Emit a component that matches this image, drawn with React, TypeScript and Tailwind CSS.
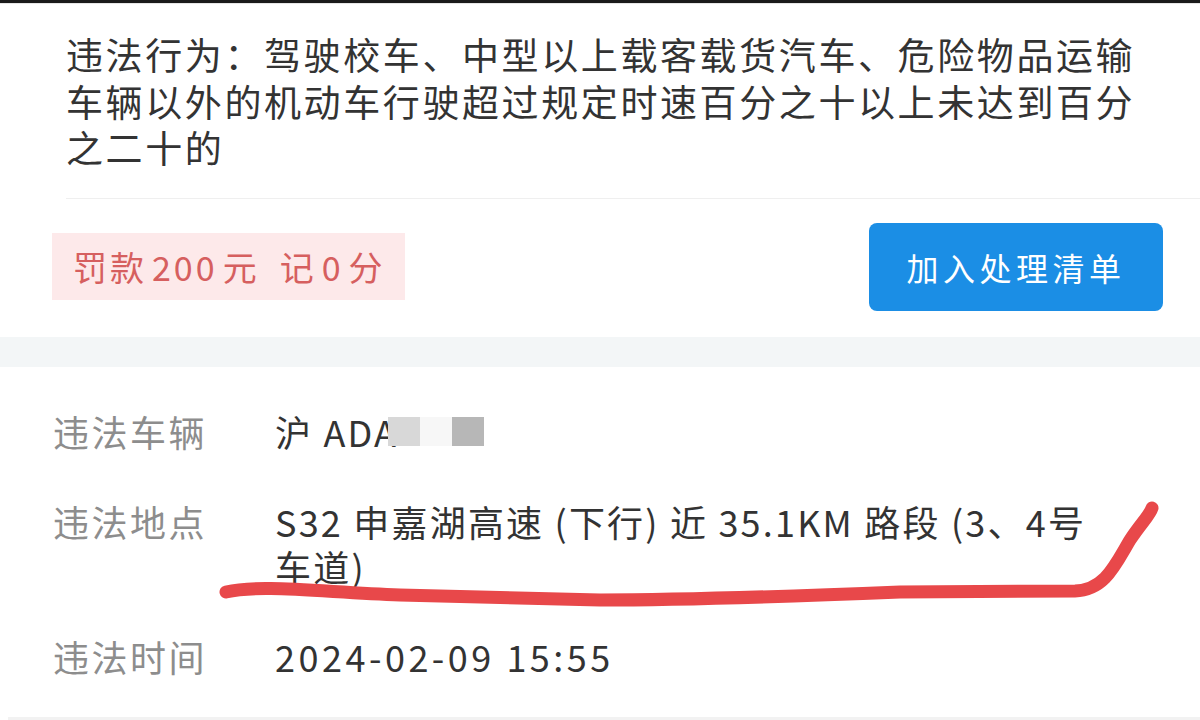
import React from "react";

const FONT = {
  fontFamily: '"Noto Sans CJK SC", "Noto Sans", sans-serif',
};

/** Label / value row in the detail list */
function InfoRow({ label, children }: { label: string; children: React.ReactNode }) {
  return (
    <div className="flex items-start">
      <div className="w-[222px] shrink-0 text-[36px] leading-[45px] tracking-[2.5px] text-[#8d8d8d]">
        {label}
      </div>
      <div className="flex-1 pr-[82px] text-[36px] leading-[45px] tracking-[2.2px] text-[#333]">
        {children}
      </div>
    </div>
  );
}

export default function App() {
  return (
    <div className="relative h-[720px] w-[1200px] overflow-hidden bg-white" style={FONT}>
      {/* top edge of the cropped screenshot */}
      <div className="h-[3px] bg-[#1a1a1a]" />
      <div className="h-px bg-[#e6e6e6]" />

      {/* Violation description */}
      <section className="pl-[66px] pt-[27px]">
        <p className="pr-[40px] text-[37px] leading-[46.5px] tracking-[2.6px] text-[#333]">
          违法行为：驾驶校车、中型以上载客载货汽车、危险物品运输车辆以外的机动车行驶超过规定时速百分之十以上未达到百分之二十的
        </p>
        <div className="mt-[27px] h-px bg-[#efefef]" />
      </section>

      {/* Penalty + action */}
      <section className="flex items-center justify-between pl-[52px] pr-[37px] pt-[24px] pb-[26px]">
        <div className="flex h-[67px] w-[353px] items-center bg-[#fde9ea] pl-[21px] text-[34px] tracking-[3px] text-[#d65f5f]">
          罚款<span className="mx-[5px]">200</span>元<span className="ml-[20px]">记</span>
          <span className="mx-[5px]">0</span>分
        </div>
        <button className="flex h-[88px] w-[294px] items-center justify-center rounded-[8px] bg-[#1b8ee5] text-[32px] tracking-[4.5px] text-white">
          加入处理清单
        </button>
      </section>

      {/* section gap band */}
      <div className="h-[30px] bg-[#f3f6f7]" />

      {/* Detail rows */}
      <section className="flex flex-col gap-[45px] pl-[53px] pt-[42px]">
        <InfoRow label="违法车辆">
          <span className="inline-flex items-center">
            沪 ADA
            <span className="-ml-[10px] h-[29px] w-[32px] bg-[#d8d8d8]" />
            <span className="h-[29px] w-[32px] bg-[#f7f7f7]" />
            <span className="h-[29px] w-[32px] bg-[#b7b7b7]" />
          </span>
        </InfoRow>
        <InfoRow label="违法地点">S32 申嘉湖高速 (下行) 近 35.1KM 路段 (3、4号车道)</InfoRow>
        <InfoRow label="违法时间">
          <span className="tracking-[3.5px]">2024-02-09 15:55</span>
        </InfoRow>
      </section>

      {/* bottom edge */}
      <div className="absolute bottom-0 left-[8px] right-0 h-[3px] bg-[#f2f2f2]" />

      {/* hand-drawn red underline annotation */}
      <svg className="pointer-events-none absolute left-0 top-0" width="1200" height="720">
        <path
          d="M 226 592 C 260 584, 320 592, 400 595 L 600 600 C 700 600, 800 596, 900 592 L 1075 591 C 1105 590, 1115 565, 1130 540 C 1142 522, 1150 515, 1152 508"
          fill="none"
          stroke="#e8484a"
          strokeWidth="13"
          strokeLinecap="round"
          strokeLinejoin="round"
        />
      </svg>
    </div>
  );
}
